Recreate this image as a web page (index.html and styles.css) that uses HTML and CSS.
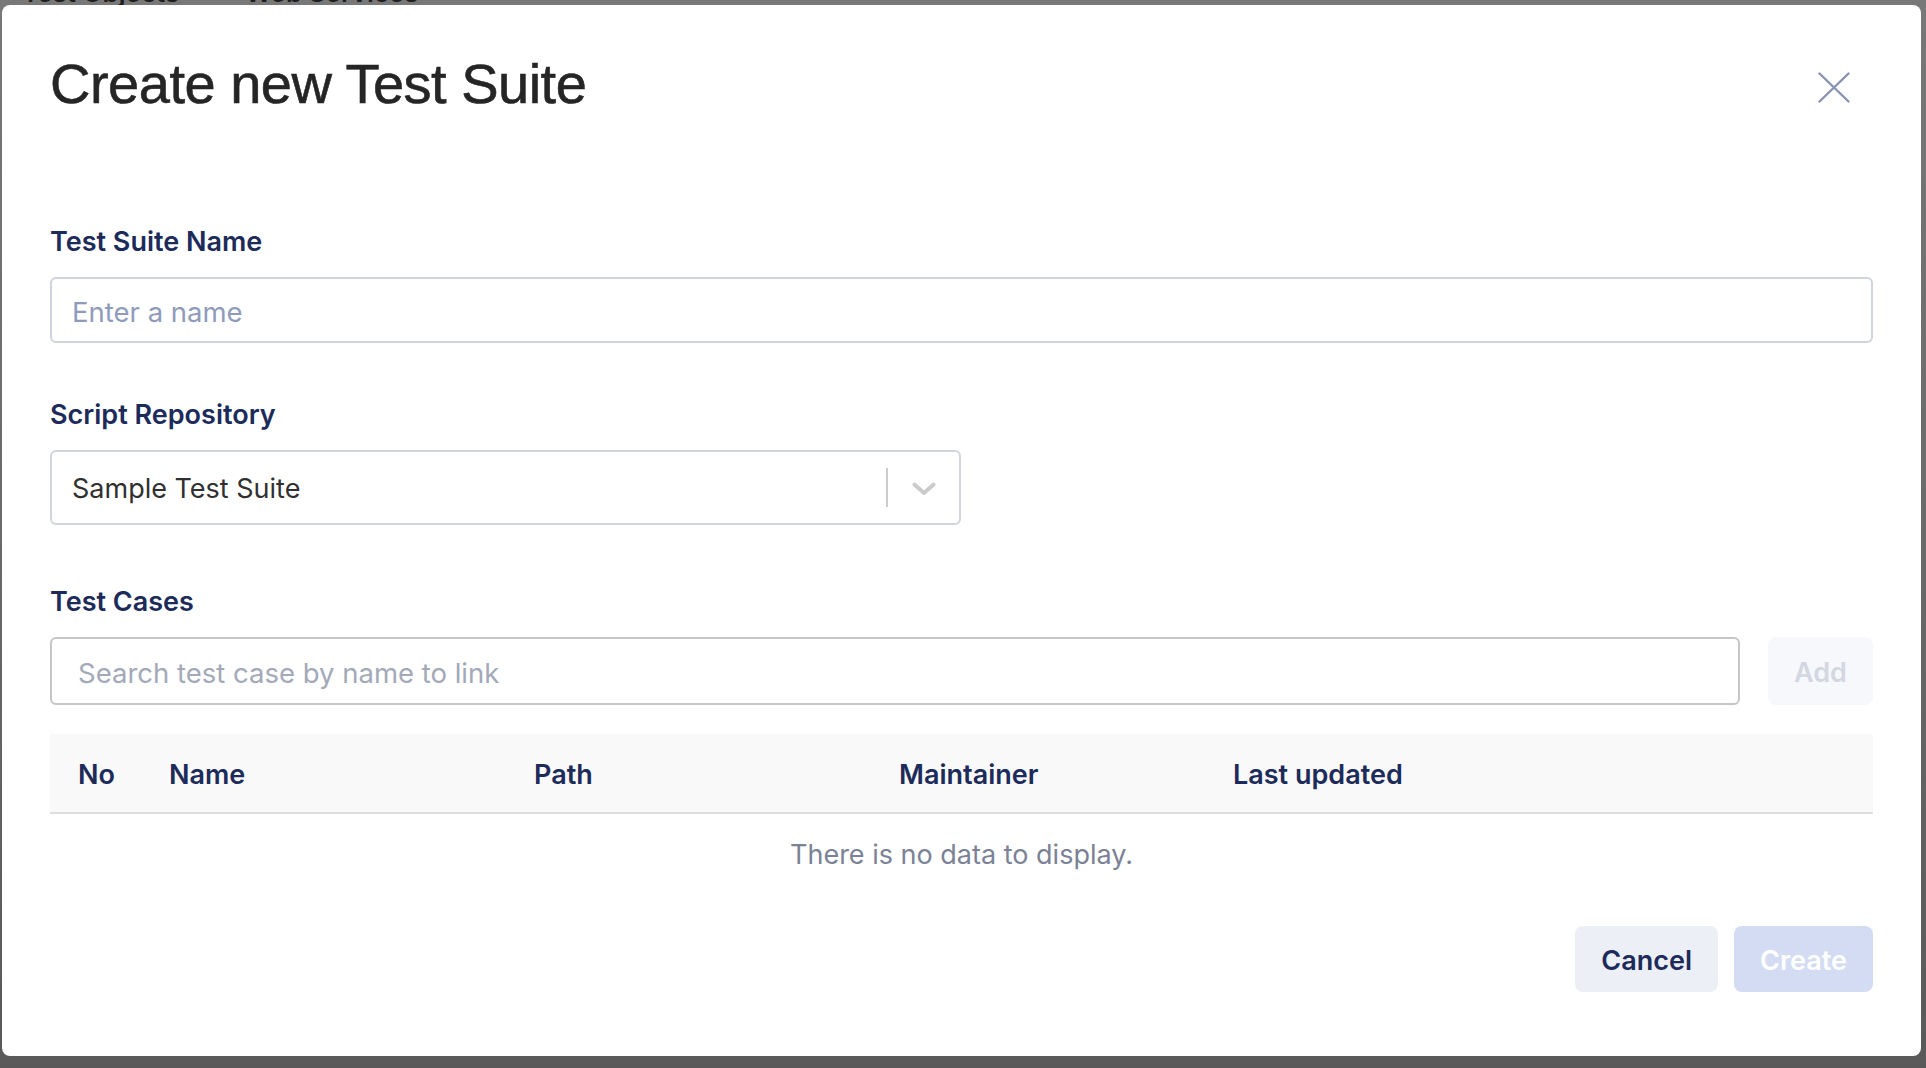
FILE: index.html
```html
<!DOCTYPE html>
<html lang="en">
<head>
<meta charset="utf-8">
<title>Create new Test Suite</title>
<link rel="stylesheet" href="styles.css">
</head>
<body>
<div class="screen">
  <div class="bg-nav">
    <span>Test Objects</span>
    <span>Web Services</span>
  </div>
  <div class="modal">
    <div class="modal-header">
      <h1 class="title">Create new Test Suite</h1>
      <button class="close" aria-label="Close">
        <svg width="32" height="32" viewBox="0 0 32 32"><path d="M1.5 1.5 L30.5 29.5 M30.5 1.5 L1.5 29.5" stroke="#8893b3" stroke-width="2.4" stroke-linecap="round" fill="none"/></svg>
      </button>
    </div>

    <div class="field field-name">
      <div class="label">Test Suite Name</div>
      <div class="input"><span class="placeholder">Enter a name</span></div>
    </div>

    <div class="field field-repo">
      <div class="label">Script Repository</div>
      <div class="select">
        <div class="select-value">Sample Test Suite</div>
        <span class="select-sep"></span>
        <div class="select-ind">
          <svg width="24" height="14" viewBox="0 0 24 14"><path d="M2.5 2.5 L12 11 L21.5 2.5" stroke="#cccccc" stroke-width="4" stroke-linecap="round" stroke-linejoin="round" fill="none"/></svg>
        </div>
      </div>
    </div>

    <div class="field field-cases">
      <div class="label">Test Cases</div>
      <div class="search-row">
        <div class="search"><span class="placeholder light">Search test case by name to link</span></div>
        <button class="btn-add">Add</button>
      </div>
    </div>

    <div class="table">
      <div class="thead">
        <div>No</div>
        <div>Name</div>
        <div>Path</div>
        <div>Maintainer</div>
        <div>Last updated</div>
      </div>
      <div class="empty">There is no data to display.</div>
    </div>

    <div class="footer">
      <button class="btn btn-cancel">Cancel</button>
      <button class="btn btn-create">Create</button>
    </div>
  </div>
</div>
</body>
</html>
```
FILE: styles.css
```css
* { box-sizing: border-box; }
html, body {
  margin: 0;
  padding: 0;
  width: 1926px;
  height: 1068px;
  overflow: hidden;
}
body {
  background: linear-gradient(180deg, #787878 0%, #6a6a6a 50%, #595959 100%);
  font-family: Inter, "Noto Sans", sans-serif;
}
.screen {
  position: relative;
  padding: 5px 5px 0 2px;
}
.bg-nav {
  position: absolute;
  top: -22px;
  left: 22px;
  display: flex;
  gap: 66px;
  font: 600 26px/30px Inter, sans-serif;
  color: #1e1e1e;
}
.modal {
  position: relative;
  z-index: 1;
  background: #ffffff;
  border-radius: 8px;
  padding: 48px 48px 64px 48px;
}
.modal-header {
  display: flex;
  justify-content: space-between;
  align-items: flex-start;
}
.title {
  margin: 2px 0 0 0;
  font: 400 56px/57px "Liberation Sans", Arial, sans-serif;
  letter-spacing: -0.5px;
  -webkit-text-stroke: 0.6px #252525;
  color: #252525;
}
.close {
  margin: 19px 23px 0 0;
  padding: 0;
  border: 0;
  background: none;
  width: 32px;
  height: 32px;
  display: block;
}
.close svg { display: block; }

.field-name { margin-top: 114px; margin-bottom: 56px; }
.field-repo { margin-bottom: 61px; }

.label {
  font: 600 27px/32px Inter, sans-serif;
  color: #1c2b5a;
  margin-bottom: 19px;
}
.input {
  height: 66px;
  border: 2px solid #cfd4dc;
  border-radius: 6px;
  padding: 4px 20px 0 20px;
  display: flex;
  align-items: center;
}
.placeholder {
  font: 400 27.5px/32px Inter, sans-serif;
  color: #8f9bbb;
}
.placeholder.light { color: #a3a9b9; }

.select {
  width: 911px;
  height: 75px;
  border: 2px solid #d2d6dc;
  border-radius: 6px;
  display: flex;
  align-items: center;
}
.select-value {
  flex: 1;
  padding: 3px 0 0 20px;
  font: 400 27px/32px Inter, sans-serif;
  color: #303030;
}
.select-sep {
  width: 2px;
  height: 39px;
  background: #cccccc;
}
.select-ind {
  width: 71px;
  display: flex;
  justify-content: center;
  align-items: center;
  padding-top: 2px;
}
.select-ind svg { display: block; }

.search-row {
  display: flex;
  gap: 28px;
}
.search {
  flex: 1;
  height: 68px;
  border: 2px solid #c6c6c6;
  border-radius: 6px;
  padding: 3px 26px 0 26px;
  display: flex;
  align-items: center;
}
.btn-add {
  width: 105px;
  height: 68px;
  border: 0;
  border-radius: 8px;
  background: #f7f8fb;
  color: #d2d7e2;
  font: 600 27px/32px Inter, sans-serif;
  padding: 3px 0 0 0;
}

.table { margin-top: 29px; }
.thead {
  height: 80px;
  background: #f9f9f9;
  border-bottom: 2px solid #dedede;
  display: grid;
  grid-template-columns: 91px 365px 365px 334px 1fr;
  align-items: center;
  padding: 3px 0 0 28px;
  font: 600 27px/32px Inter, sans-serif;
  color: #1c2b5a;
}
.empty {
  text-align: center;
  padding: 25px 0;
  font: 400 27px/32px Inter, sans-serif;
  color: #7b8296;
}

.footer {
  margin-top: 30px;
  display: flex;
  justify-content: flex-end;
  gap: 16px;
}
.btn {
  height: 66px;
  border: 0;
  border-radius: 8px;
  font: 600 27px/32px Inter, sans-serif;
  padding: 3px 26px 0 26px;
}
.btn-cancel {
  background: #eceff6;
  color: #1c2b5a;
}
.btn-create {
  background: #d4dcf3;
  color: #ffffff;
}
```
